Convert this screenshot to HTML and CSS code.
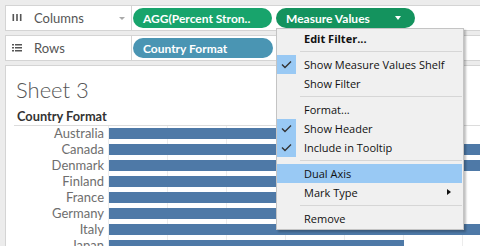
FILE: index.html
```html
<!DOCTYPE html>
<html lang="en">
<head>
    <meta charset="UTF-8">
    <title>Sheet 3</title>
    <link rel="stylesheet" href="styles.css">
</head>
<body>
    <div class="shelves">
        <div class="shelf">
            <div class="shelf-label">
                <svg class="shelf-icon" width="10" height="9" viewBox="0 0 10 9">
                    <rect x="0.5" y="1" width="1.6" height="7" fill="#555"/>
                    <rect x="4.2" y="1" width="1.6" height="7" fill="#555"/>
                    <rect x="7.9" y="1" width="1.6" height="7" fill="#555"/>
                </svg>
                <span class="shelf-name">Columns</span>
                <span class="shelf-caret"></span>
            </div>
            <div class="shelf-pills">
                <span class="pill pill-green">AGG(Percent Stron..</span>
                <span class="pill pill-green-dark">Measure Values <span class="pill-caret"></span></span>
            </div>
        </div>
        <div class="shelf">
            <div class="shelf-label">
                <svg class="shelf-icon" width="10" height="9" viewBox="0 0 10 9">
                    <rect x="0" y="1" width="2" height="1.5" fill="#555"/>
                    <rect x="3" y="1" width="7" height="1.5" fill="#555"/>
                    <rect x="0" y="4" width="2" height="1.5" fill="#555"/>
                    <rect x="3" y="4" width="7" height="1.5" fill="#555"/>
                    <rect x="0" y="7" width="2" height="1.5" fill="#555"/>
                    <rect x="3" y="7" width="7" height="1.5" fill="#555"/>
                </svg>
                <span class="shelf-name">Rows</span>
            </div>
            <div class="shelf-pills">
                <span class="pill pill-blue">Country Format</span>
            </div>
        </div>
    </div>

    <div class="sheet">
        <h2 class="sheet-title">Sheet 3</h2>
        <div class="chart">
            <div class="chart-head">Country Format</div>
            <div class="chart-body">
                <div class="row"><span class="label">Australia</span><span class="bar" style="width: 340px;"></span></div>
                <div class="row"><span class="label">Canada</span><span class="bar" style="width: 380px;"></span></div>
                <div class="row"><span class="label">Denmark</span><span class="bar" style="width: 380px;"></span></div>
                <div class="row"><span class="label">Finland</span><span class="bar" style="width: 335px;"></span></div>
                <div class="row"><span class="label">France</span><span class="bar" style="width: 330px;"></span></div>
                <div class="row"><span class="label">Germany</span><span class="bar" style="width: 345px;"></span></div>
                <div class="row"><span class="label">Italy</span><span class="bar" style="width: 380px;"></span></div>
                <div class="row"><span class="label">Japan</span><span class="bar" style="width: 295px;"></span></div>
            </div>
        </div>
    </div>

    <!-- context menu for the Measure Values pill -->
    <div class="menu">
        <div class="menu-item bold">Edit Filter...</div>
        <div class="menu-sep"></div>
        <div class="menu-item checked"><span class="check"><svg width="19" height="19" viewBox="0 0 19 19"><polyline points="5,9.5 8,12.5 14,6.5" fill="none" stroke="#333" stroke-width="1.4"/></svg></span>Show Measure Values Shelf</div>
        <div class="menu-item">Show Filter</div>
        <div class="menu-sep"></div>
        <div class="menu-item">Format...</div>
        <div class="menu-item checked"><span class="check"><svg width="19" height="19" viewBox="0 0 19 19"><polyline points="5,9.5 8,12.5 14,6.5" fill="none" stroke="#333" stroke-width="1.4"/></svg></span>Show Header</div>
        <div class="menu-item checked"><span class="check"><svg width="19" height="19" viewBox="0 0 19 19"><polyline points="5,9.5 8,12.5 14,6.5" fill="none" stroke="#333" stroke-width="1.4"/></svg></span>Include in Tooltip</div>
        <div class="menu-sep"></div>
        <div class="menu-item active">Dual Axis</div>
        <div class="menu-item submenu">Mark Type<span class="sub-arrow"></span></div>
        <div class="menu-sep"></div>
        <div class="menu-item">Remove</div>
    </div>
</body>
</html>
```

FILE: styles.css
```css
body {
    margin: 0;
    width: 480px;
    height: 246px;
    overflow: hidden;
    position: relative;
    background: #ececec;
    font-family: Lato, "Open Sans", sans-serif;
}
.shelves {
    display: flex;
    flex-direction: column;
    gap: 4px;
    padding: 5px 0 0 5px;
}
.shelf {
    display: flex;
    height: 24px;
    background: #fff;
    border: 1px solid #d4d4d4;
    border-right: none;
}
.shelf-label {
    width: 119px;
    padding-left: 6px;
    display: flex;
    align-items: center;
    border-right: 1px solid #d4d4d4;
    position: relative;
}
.shelf-icon {
    display: block;
    margin-top: -2px;
}
.shelf-name {
    margin-left: 12px;
    font-size: 13px;
    color: #555;
}
.shelf-caret {
    margin-left: auto;
    margin-right: 6px;
    border-left: 3px solid transparent;
    border-right: 3px solid transparent;
    border-top: 3px solid #aaa;
}
.shelf-pills {
    display: flex;
    align-items: center;
    gap: 4px;
    padding-left: 1px;
}
.pill {
    display: flex;
    align-items: center;
    box-sizing: border-box;
    width: 139px;
    height: 20px;
    padding-left: 10px;
    border-radius: 10px;
    color: #fff;
    font-size: 12px;
    font-weight: bold;
    white-space: nowrap;
}
.pill-green { background: #18a46c; }
.pill-green-dark { background: #14935e; }
.pill-blue { background: #4a95b3; width: 140px; }
.pill-caret {
    margin-left: auto;
    margin-right: 14px;
    border-left: 3.5px solid transparent;
    border-right: 3.5px solid transparent;
    border-top: 4px solid #fff;
}

.sheet {
    margin: 4px 0 0 5px;
    height: 200px;
    background: #fff;
    border: 1px solid #d4d4d4;
    border-right: none;
    padding-left: 8px;
}
.sheet-title {
    margin: 10px 0 0 2px;
    font-size: 22px;
    line-height: 28px;
    font-weight: 300;
    color: #555;
}
.chart-head {
    margin-top: 4px;
    height: 17px;
    line-height: 17px;
    padding-left: 3px;
    font-size: 12.8px;
    font-weight: bold;
    color: #333;
    border-bottom: 1px solid #dcdcdc;
}
.chart-body {
    background-image: linear-gradient(to right, #ececec 1px, transparent 1px);
    background-size: 59px 100%;
    background-position: 94px 0;
}
.row {
    display: flex;
    height: 16px;
    white-space: nowrap;
}
.label {
    flex: none;
    width: 90px;
    padding-right: 4px;
    text-align: right;
    font-size: 13px;
    line-height: 14px;
    color: #6e6e6e;
    background: #fff;
}
.bar {
    flex: none;
    margin: 2px 0 0 1px;
    height: 11px;
    background: #4e79a7;
}

.menu {
    position: absolute;
    left: 276px;
    top: 28px;
    width: 188px;
    box-sizing: border-box;
    padding-bottom: 1px;
    background: #f0f0f0;
    border: 1px solid #c4c4c4;
    box-shadow: 2px 2px 2px rgba(0, 0, 0, 0.25);
    font-family: "Open Sans", sans-serif;
    font-size: 11px;
    color: #111;
}
.menu-item {
    position: relative;
    height: 19px;
    line-height: 19px;
    padding-left: 27px;
    white-space: nowrap;
}
.menu-item.bold { font-weight: bold; }
.menu-item.active {
    background: #99c9f4;
    margin-right: 1px;
}
.check {
    position: absolute;
    left: 0;
    top: 0;
    width: 19px;
    height: 19px;
    background: #99c9f4;
}
.check svg { display: block; }
.menu-sep {
    height: 1px;
    margin: 3px 1px 3px 23px;
    background: #d6d6d6;
}
.sub-arrow {
    position: absolute;
    right: 12px;
    top: 6px;
    border-top: 3.5px solid transparent;
    border-bottom: 3.5px solid transparent;
    border-left: 4px solid #111;
}
```
